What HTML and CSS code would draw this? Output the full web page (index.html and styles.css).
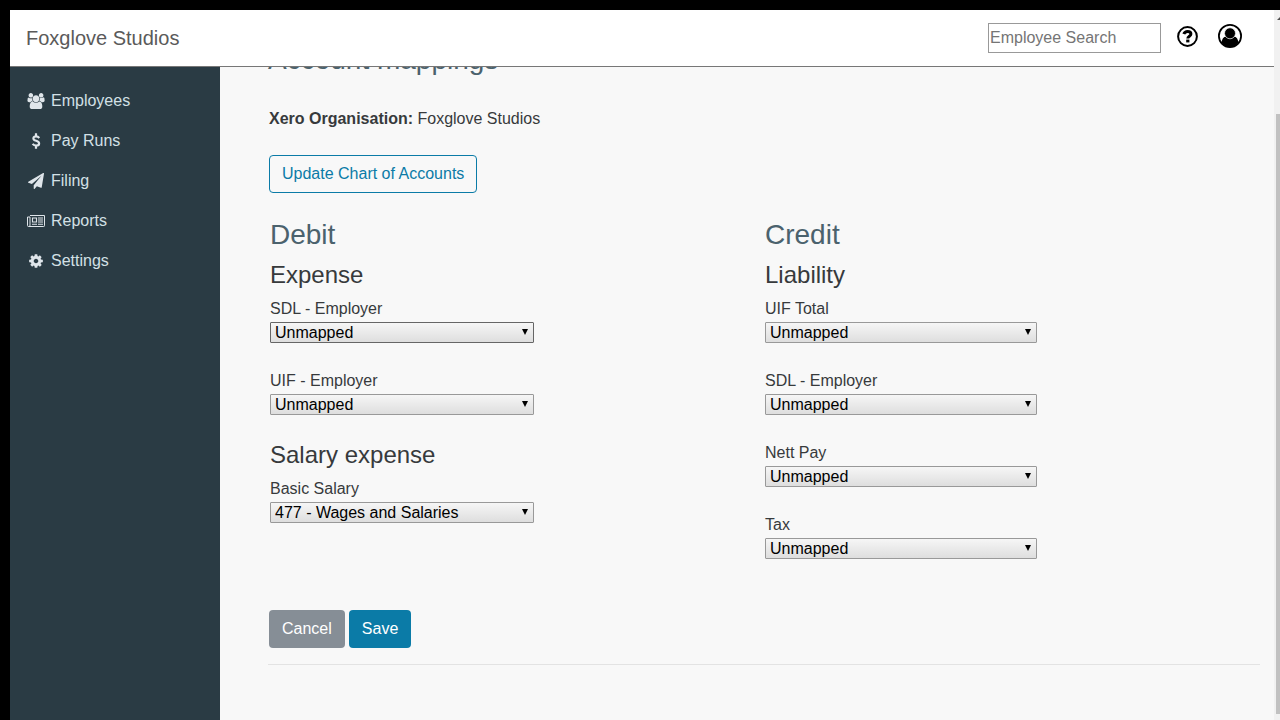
FILE: index.html
```
<!DOCTYPE html>
<html lang="en">
<head>
    <meta charset="UTF-8">
    <meta name="viewport" content="width=device-width, initial-scale=1.0">
    <title>Account mappings</title>
    <link rel="stylesheet" href="styles.css">
</head>
<body>
    <div class="app">
        <header class="topbar">
            <a class="brand" href="#">Foxglove Studios</a>
            <input class="search" type="text" placeholder="Employee Search" aria-label="Employee Search">
            <div class="topbar-icons">
                <button class="icon-btn" type="button" aria-label="Help">
                    <svg width="21" height="21" viewBox="0 0 21 21" fill="none" stroke="#000">
                        <circle cx="10.5" cy="10.5" r="9.4" stroke-width="2"/>
                        <path d="M6.800 8.100C7.500 6.200 8.900 5.500 10.600 5.500c1.900 0 3.300 1 3.300 2.500 0 2.200-3.100 2.100-3.100 4.400" stroke-width="3"/>
                        <path d="M9.200 15h3.200" stroke-width="2.800"/>
                    </svg>
                </button>
                <button class="icon-btn" type="button" aria-label="Account">
                    <svg width="24" height="24" viewBox="0 0 24 24">
                        <circle cx="12" cy="12" r="11.100" fill="none" stroke="#000" stroke-width="1.800"/>
                        <path d="M3.600 18.400c.3-3.300 1.800-5.600 4.600-5.900h7.600c2.800.3 4.300 2.600 4.600 5.900C18.500 21.300 15.500 23 12 23s-6.500-1.700-8.400-4.600z"/>
                        <circle cx="12" cy="9.300" r="5.500" stroke="#fff" stroke-width="0.700"/>
                    </svg>
                </button>
            </div>
        </header>

        <div class="body">
            <!-- Side menu -->
            <nav class="sidebar">
                <a href="#">
                    <svg class="wide" viewBox="0 0 1920 1792"><path d="M593 896q-162 5-265 128h-134q-82 0-138-40.5t-56-118.5q0-353 124-353 6 0 43.5 21t97.5 42.5 119 21.5q67 0 133-23-5 37-5 66 0 159 90 288zm1071 637q0 120-73 189.5t-194 69.5h-874q-121 0-194-69.5t-73-189.5q0-53 3.5-103.5t14-109 26.5-108.5 43-97.5 62-81 85.5-53.5 111.5-20q10 0 43 21.5t73 48 107 48 135 21.5 135-21.5 107-48 73-48 43-21.5q61 0 111.5 20t85.5 53.5 62 81 43 97.5 26.5 108.5 14 109 3.5 103.5zm-1024-1277q0 106-75 181t-181 75-181-75-75-181 75-181 181-75 181 75 75 181zm704 384q0 159-112.5 271.5t-271.5 112.5-271.5-112.5-112.5-271.5 112.5-271.5 271.5-112.5 271.5 112.5 112.5 271.5zm576 225q0 78-56 118.5t-138 40.5h-134q-103-123-265-128 90-129 90-288 0-29-5-66 66 23 133 23 59 0 119-21.5t97.5-42.5 43.5-21q124 0 124 353zm-128-609q0 106-75 181t-181 75-181-75-75-181 75-181 181-75 181 75 75 181z"/></svg>
                    Employees
                </a>
                <a href="#">
                    <svg viewBox="0 0 16 16"><path d="M11.3 4.9C10.5 4 9.5 3.4 8.1 3.4c-1.6 0-2.7.8-2.7 2 0 3.1 5.7 1.7 5.7 5 0 1.4-1.2 2.2-2.9 2.2-1.6 0-2.7-.6-3.6-1.7M8 .2v3.2M8 12.600v3.200" fill="none" stroke="currentColor" stroke-width="2.200"/></svg>
                    Pay Runs
                </a>
                <a href="#">
                    <svg viewBox="0 0 1792 1792"><path d="M1764 11q33 24 27 64l-256 1536q-5 29-32 45-14 8-31 8-11 0-24-5l-453-185-242 295q-18 23-49 23-13 0-22-4-19-7-30.5-23.5t-11.5-36.5v-349l864-1059-1069 925-395-162q-37-14-40-55-2-40 32-59l1664-960q15-9 32-9 20 0 36 11z"/></svg>
                    Filing
                </a>
                <a href="#">
                    <svg class="wide" viewBox="0 0 18 16">
                        <path d="M3 2.5h14.5v10.2q0 .8-.8.8H1.5q-1 0-1-1V4H3v8.3q0 1.2-1.2 1.2" fill="none" stroke="currentColor"/>
                        <path d="M5.5 5h4v4h-4z" fill="none" stroke="currentColor" stroke-width="1.1"/>
                        <path d="M11 5h5M11 7h5M11 9h5M5 11.2h5M11 11.2h5" stroke="currentColor" stroke-width="1.1"/>
                    </svg>
                    Reports
                </a>
                <a href="#">
                    <svg viewBox="0 0 1792 1792"><path d="M1152 896q0-106-75-181t-181-75-181 75-75 181 75 181 181 75 181-75 75-181zm512-109v222q0 12-8 23t-20 13l-185 28q-19 54-39 91 35 50 107 138 10 12 10 25t-9 23q-27 37-99 108t-94 71q-12 0-26-9l-138-108q-44 23-91 38-16 136-29 186-7 28-36 28h-222q-14 0-24.5-8.5t-11.5-21.5l-28-184q-49-16-90-37l-141 107q-10 9-25 9-14 0-25-11-126-114-165-168-7-10-7-23 0-12 8-23 15-21 51-66.5t54-70.5q-27-50-41-99l-183-27q-13-2-21-12.5t-8-23.5v-222q0-12 8-23t19-13l186-28q14-46 39-92-40-57-107-138-10-12-10-24 0-10 9-23 26-36 98.5-107.5t94.5-71.5q13 0 26 10l138 107q44-23 91-38 16-136 29-186 7-28 36-28h222q14 0 24.5 8.5t11.5 21.5l28 184q49 16 90 37l142-107q9-9 24-9 13 0 25 10 129 119 165 170 7 8 7 22 0 12-8 23-15 21-51 66.5t-54 70.5q26 50 41 98l183 28q13 2 21 12.5t8 23.5z"/></svg>
                    Settings
                </a>
            </nav>

            <main class="content">
                <h3 class="page-title">Account mappings</h3>
                <p class="organisation"><strong>Xero Organisation:</strong> Foxglove Studios</p>
                <button class="btn btn-outline" type="button">Update Chart of Accounts</button>

                <form>
                    <div class="mappings">
                        <section class="debit">
                            <h3>Debit</h3>
                            <h4>Expense</h4>
                            <div class="field">
                                <label for="debit-sdl">SDL - Employer</label>
                                <div class="select focused"><select id="debit-sdl"><option>Unmapped</option></select></div>
                            </div>
                            <div class="field">
                                <label for="debit-uif">UIF - Employer</label>
                                <div class="select"><select id="debit-uif"><option>Unmapped</option></select></div>
                            </div>
                            <h4>Salary expense</h4>
                            <div class="field">
                                <label for="debit-salary">Basic Salary</label>
                                <div class="select"><select id="debit-salary"><option>477 - Wages and Salaries</option></select></div>
                            </div>
                        </section>
                        <section class="credit">
                            <h3>Credit</h3>
                            <h4>Liability</h4>
                            <div class="field">
                                <label for="credit-uif">UIF Total</label>
                                <div class="select"><select id="credit-uif"><option>Unmapped</option></select></div>
                            </div>
                            <div class="field">
                                <label for="credit-sdl">SDL - Employer</label>
                                <div class="select"><select id="credit-sdl"><option>Unmapped</option></select></div>
                            </div>
                            <div class="field">
                                <label for="credit-nett">Nett Pay</label>
                                <div class="select"><select id="credit-nett"><option>Unmapped</option></select></div>
                            </div>
                            <div class="field">
                                <label for="credit-tax">Tax</label>
                                <div class="select"><select id="credit-tax"><option>Unmapped</option></select></div>
                            </div>
                        </section>
                    </div>
                    <div class="actions">
                        <button class="btn btn-secondary" type="button">Cancel</button>
                        <button class="btn btn-primary" type="submit">Save</button>
                    </div>
                </form>
                <hr>
            </main>
        </div>
    </div>

    <!-- Scrollbar -->
    <div class="scrollbar">
        <div class="scrollbar-arrow"></div>
        <div class="scrollbar-thumb"></div>
    </div>
</body>
</html>
```

FILE: styles.css
```
* {
    box-sizing: border-box;
}

body {
    margin: 0;
    padding: 10px 0 0 10px;
    height: 100vh;
    display: flex;
    overflow: hidden;
    background: #000;
    color: #373a3c;
    font-family: "Liberation Sans", Arial, sans-serif;
    font-size: 16px;
    line-height: 24px;
}

a {
    text-decoration: none;
}

button,
input,
select {
    font: inherit;
}

.app {
    flex: 1;
    min-width: 0;
    display: flex;
    flex-direction: column;
    background: #f8f8f8;
}

/* Top bar */
.topbar {
    display: flex;
    align-items: center;
    height: 57px;
    flex-shrink: 0;
    padding: 0 32px 0 16px;
    background: #fff;
    border-bottom: 1px solid #777;
}

.brand {
    margin-right: auto;
    color: #5a5a5a;
    font-size: 20px;
}

.search {
    width: 173px;
    height: 30px;
    margin-right: 16px;
    padding: 1px;
    border: 1px solid #999;
    border-radius: 0;
    background: #fff;
}

.search::placeholder {
    color: #757575;
}

.topbar-icons {
    display: flex;
    align-items: center;
    gap: 20px;
    padding-bottom: 4px;
}

.icon-btn {
    display: flex;
    padding: 0;
    border: 0;
    background: none;
}

.body {
    flex: 1;
    min-height: 0;
    display: flex;
}

/* Side menu */
.sidebar {
    width: 210px;
    flex-shrink: 0;
    padding-top: 14px;
    background: #2a3b44;
}

.sidebar a {
    display: flex;
    align-items: center;
    gap: 6px;
    padding: 8px 17px;
    color: #d3e0e6;
}

.sidebar svg {
    width: 16px;
    height: 16px;
    margin: 0 1px 1px;
    fill: #dfe5ea;
}

.sidebar svg.wide {
    width: 18px;
    margin: 0 0 1px;
}

.sidebar svg path {
    color: #dfe5ea;
}

/* Content */
.content {
    flex: 1;
    min-width: 0;
    overflow: hidden;
    padding: 0 14px 0 48px;
}

h3,
h4 {
    margin: 0 0 8px;
    font-weight: normal;
}

h3 {
    margin-bottom: 9px;
    color: #4b626d;
    font-size: 28px;
    line-height: 34px;
}

h4 {
    font-size: 24px;
    line-height: 28px;
}

/* scrolled partly under the top bar */
.page-title {
    margin: -24px 0 30px;
}

.organisation {
    margin: 0 0 24px;
}

.organisation,
.actions {
    padding-left: 1px;
}

.btn {
    display: inline-block;
    padding: 6px 12px;
    border: 1px solid transparent;
    border-radius: 4px;
    color: #fff;
}

.btn-outline {
    margin-left: 1px;
    border-color: #0b7ba7;
    background: transparent;
    color: #0b7ba7;
}

.btn-secondary {
    background: #868e96;
}

.btn-primary {
    background: #0b7ba7;
}

.mappings {
    display: grid;
    grid-template-columns: 1fr 1fr;
    padding: 25px 0 0 2px;
}

.field {
    height: 72px;
}

.field label {
    display: block;
}

.select {
    position: relative;
    width: 264px;
    margin-top: 1px;
}

.credit .select {
    width: 272px;
}

.select::after {
    content: "";
    position: absolute;
    top: 7px;
    right: 6px;
    border: 3px solid transparent;
    border-top: 6px solid #000;
    border-bottom: 0;
    pointer-events: none;
}

.select select {
    display: block;
    width: 100%;
    height: 21px;
    padding: 0 20px 0 4px;
    border: 1px solid #999;
    border-radius: 1px;
    appearance: none;
    background: linear-gradient(#f6f6f6, #dedede);
    color: #000;
    line-height: 19px;
}

.select.focused select {
    border-color: #666;
}

.actions {
    display: flex;
    gap: 4px;
    padding-top: 25px;
}

hr {
    margin: 16px 0;
    border: 0;
    border-top: 1px solid #e3e3e3;
}

/* Scrollbar */
.scrollbar {
    width: 6px;
    padding: 6px 0 6px 2px;
    overflow: hidden;
    display: flex;
    flex-direction: column;
    background: #f1f1f1;
}

.scrollbar-arrow {
    width: 8px;
    border: 4px solid transparent;
    border-top: 0;
    border-bottom: 4px solid #505050;
    margin-left: 1px;
}

.scrollbar-thumb {
    flex: 1;
    margin-top: 94px;
    background: #c1c1c1;
}
```
